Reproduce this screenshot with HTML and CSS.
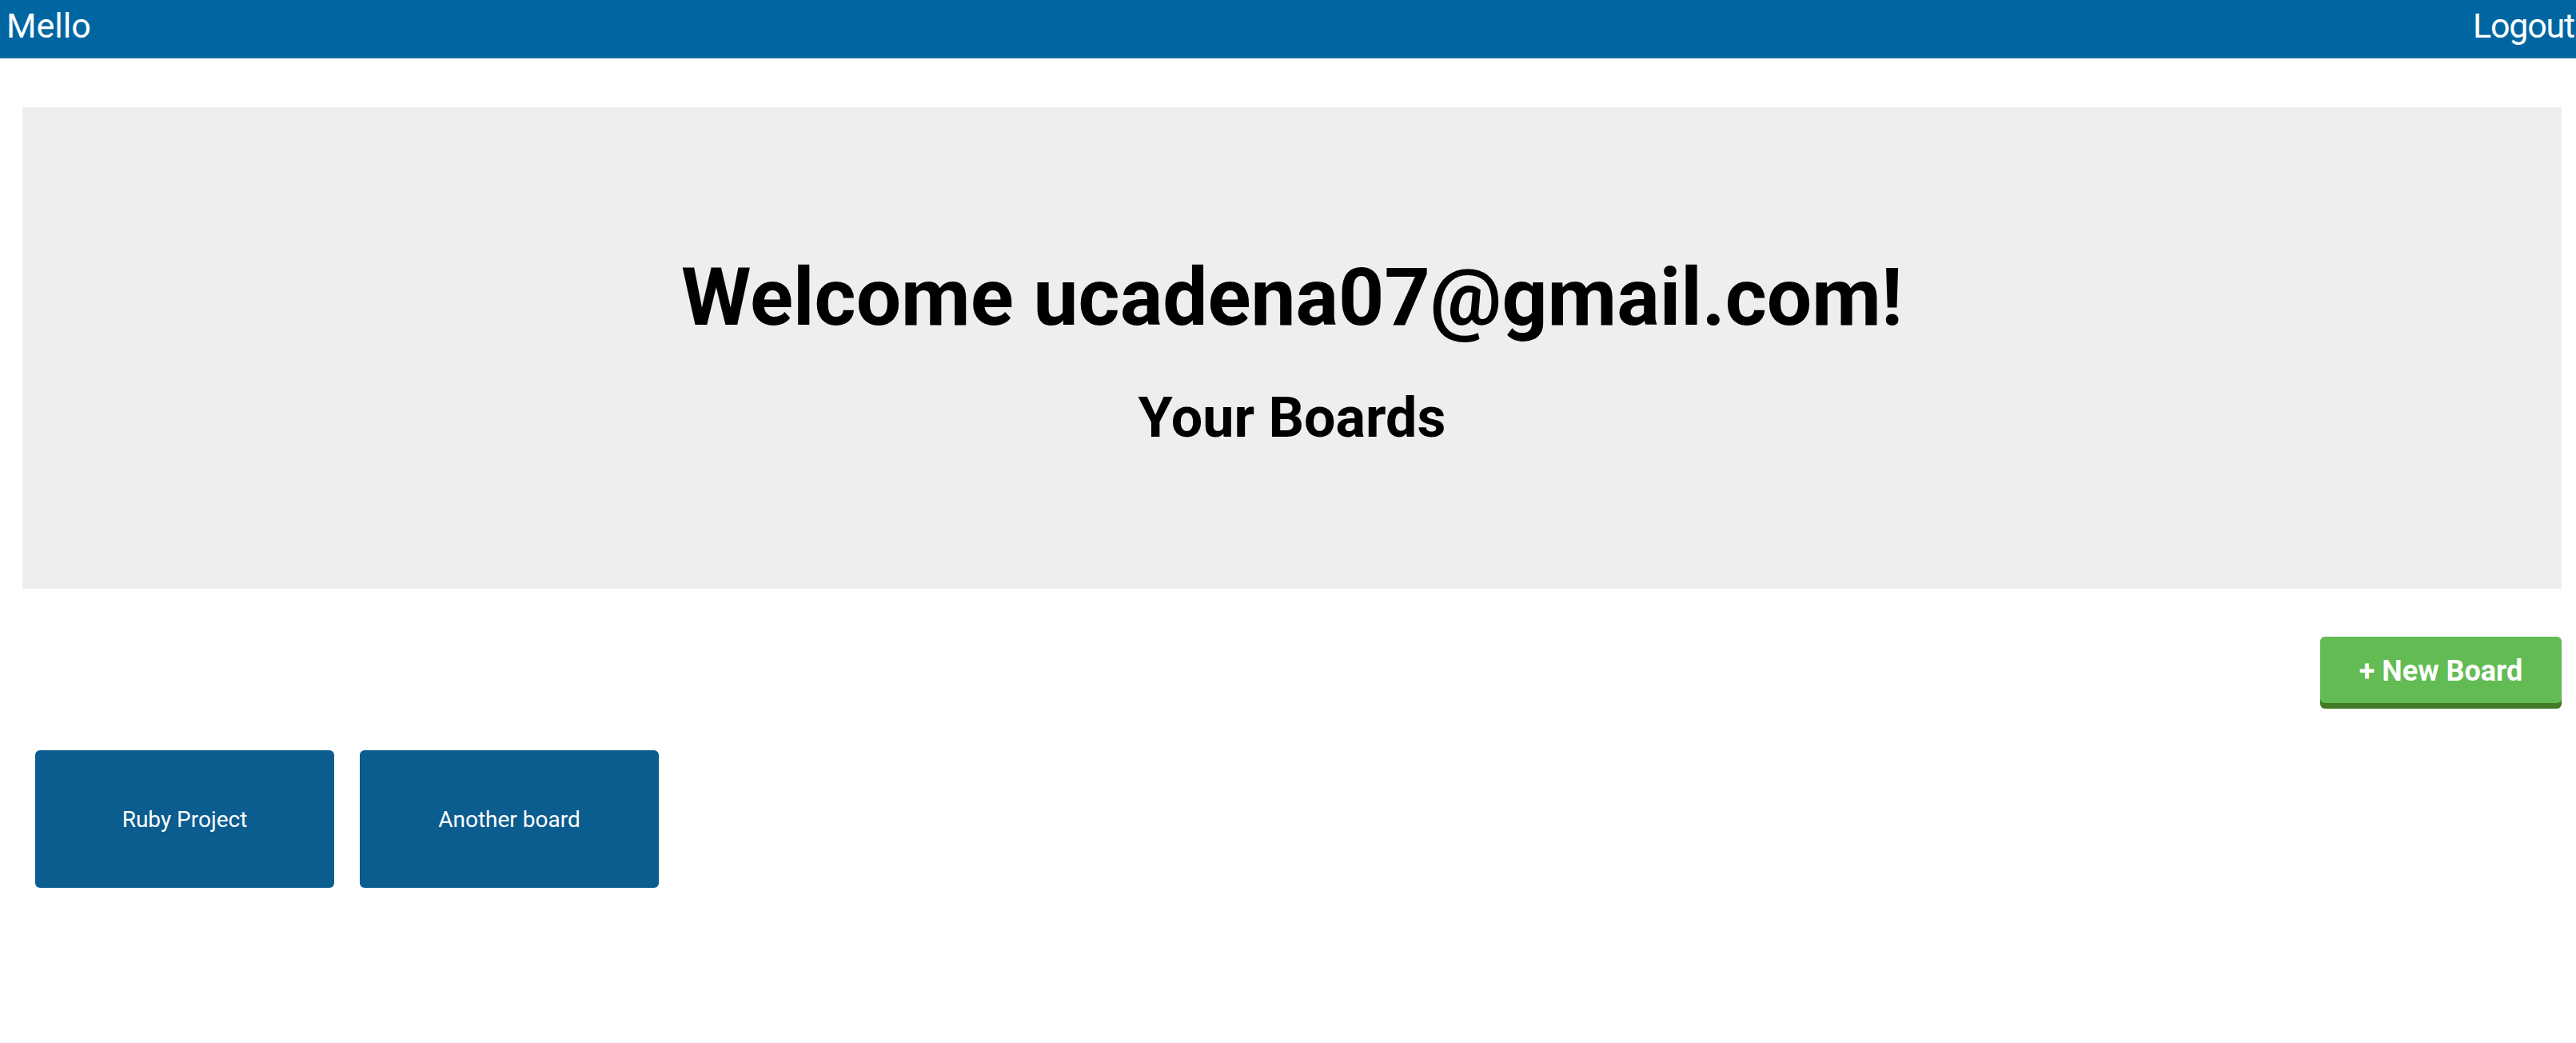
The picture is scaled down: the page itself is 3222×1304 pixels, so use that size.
FILE: index.html
```html
<!DOCTYPE html>
<html lang="en">
<head>
<meta charset="utf-8">
<title>Mello</title>
<link rel="stylesheet" href="styles.css">
</head>
<body>
<nav class="navbar">
  <a class="brand" href="#">Mello</a>
  <a class="logout" href="#">Logout</a>
</nav>
<main class="container">
  <section class="jumbotron">
    <h1 class="welcome">Welcome ucadena07@gmail.com!</h1>
    <h2 class="subtitle">Your Boards</h2>
  </section>
  <div class="actions">
    <button class="new-board">+ New Board</button>
  </div>
  <div class="boards">
    <a class="board" href="#">Ruby Project</a>
    <a class="board" href="#">Another board</a>
  </div>
</main>
</body>
</html>
```
FILE: styles.css
```css
* { box-sizing: border-box; }
html, body {
  margin: 0;
  padding: 0;
  background: #ffffff;
  font-family: Roboto, "Liberation Sans", Arial, sans-serif;
}
.navbar {
  height: 73px;
  background: #0066a2;
  display: flex;
  justify-content: space-between;
  align-items: flex-start;
  padding: 7px 2px 0 8px;
}
.brand, .logout {
  color: #ffffff;
  text-decoration: none;
  font-size: 43px;
  line-height: 1.2;
}
.logout {
  letter-spacing: -1.2px;
}
.container {
  padding: 61px 18px 0 28px;
}
.jumbotron {
  background: #edeef0;
  height: 602px;
  padding-top: 178px;
  text-align: center;
}
.welcome {
  margin: 0;
  font-size: 100px;
  line-height: 1.2;
  font-weight: 700;
  color: #000000;
}
.subtitle {
  margin: 48px 0 0;
  font-size: 70px;
  line-height: 1.2;
  font-weight: 700;
  color: #000000;
}
.actions {
  display: flex;
  justify-content: flex-end;
  margin-top: 60px;
}
.new-board {
  font-family: Roboto, "Liberation Sans", Arial, sans-serif;
  background: #62bc53;
  color: #ffffff;
  border: none;
  border-radius: 6px;
  box-shadow: 0 7px 0 #437a25;
  font-size: 36px;
  font-weight: 700;
  line-height: 43px;
  padding: 22px 48px 18px;
  height: 83px;
  width: 302px;
  cursor: pointer;
}
.boards {
  display: flex;
  gap: 32px;
  margin-top: 59px;
  padding-left: 16px;
}
.board {
  width: 374px;
  height: 172px;
  background: #0b5c8f;
  border-radius: 6px;
  color: #ffffff;
  text-decoration: none;
  font-size: 28px;
  display: flex;
  align-items: center;
  justify-content: center;
}
```
